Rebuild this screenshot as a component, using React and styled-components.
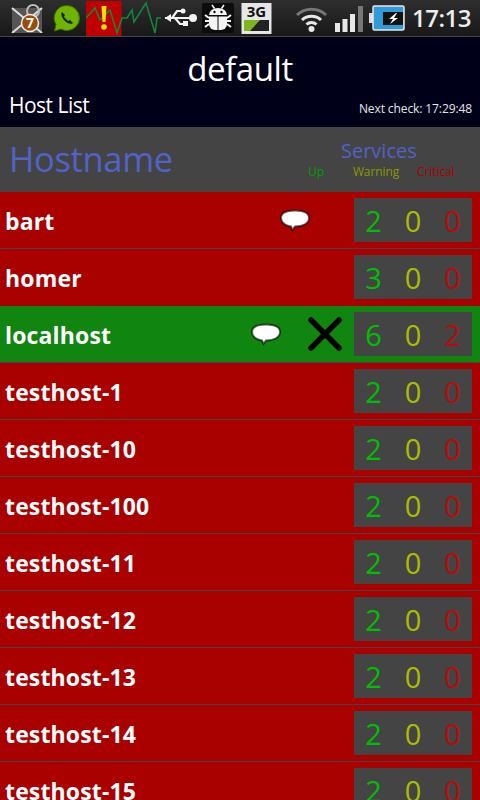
import styled, { createGlobalStyle } from 'styled-components'

const GlobalStyle = createGlobalStyle`
  html, body {
    margin: 0;
    padding: 0;
    background: #000;
  }
  body {
    font-family: 'Open Sans', 'Noto Sans', sans-serif;
  }
`

const Screen = styled.div`
  width: 480px;
  height: 800px;
  overflow: hidden;
  display: flex;
  flex-direction: column;
`

const StatusBar = styled.div`
  flex: 0 0 37px;
  box-sizing: border-box;
  display: flex;
  align-items: center;
  padding-left: 11px;
  background: linear-gradient(#2e2e2e, #181818);
  border-bottom: 1px solid #444;
`

const StatusIcon = styled.svg`
  flex: none;
  display: block;
  margin-left: ${(p) => p.$left || 0}px;
`

const Clock = styled.span`
  margin-left: 7px;
  color: #eee;
  font-size: 24px;
  font-weight: 600;
  line-height: 36px;
  letter-spacing: -0.5px;
`

const TitleBar = styled.header`
  flex: 0 0 90px;
  background: #000018;
  color: #fff;
  display: flex;
  flex-direction: column;
`

const AppTitle = styled.h1`
  margin: 9px 0 0;
  font-size: 33px;
  line-height: 45px;
  font-weight: 400;
  letter-spacing: -0.4px;
  text-align: center;
`

const TitleRow = styled.div`
  display: flex;
  justify-content: space-between;
  align-items: baseline;
  padding: 0 8px 0 9px;
`

const PageName = styled.span`
  font-size: 21px;
  line-height: 28px;
  letter-spacing: -0.5px;
`

const NextCheck = styled.span`
  font-size: 12px;
  letter-spacing: -0.1px;
  color: #e6e6e6;
`

const ColumnHeader = styled.div`
  flex: 0 0 65px;
  background: #444;
  display: flex;
  align-items: center;
  justify-content: space-between;
`

const HostnameLabel = styled.span`
  margin-left: 9px;
  margin-top: -2px;
  color: #4f63c8;
  font-size: 34.5px;
  letter-spacing: -0.35px;
`

const ServicesHead = styled.div`
  width: 172px;
  margin-top: -3px;
  display: flex;
  flex-direction: column;
  align-items: flex-start;
`

const ServicesLabel = styled.span`
  color: #4f63c8;
  font-size: 20px;
  line-height: 27px;
  margin-left: 33px;
`

const ServicesLegend = styled.div`
  align-self: stretch;
  display: flex;
  font-size: 12px;
  line-height: 16px;
  letter-spacing: -0.1px;
`

const LegendItem = styled.span`
  color: ${(p) => p.$color};
  margin-left: ${(p) => p.$left}px;
`

const HostRow = styled.div`
  flex: 0 0 57px;
  box-sizing: border-box;
  display: flex;
  align-items: center;
  background: ${(p) => (p.$ok ? '#10850f' : '#a90000')};
  border-bottom: 1px solid ${(p) => (p.$line ? '#444' : '#a90000')};
  padding-right: 8px;
`

const HostName = styled.span`
  flex: 1;
  margin-left: 5px;
  padding-top: 2px;
  color: #fff;
  font-size: 23px;
  font-weight: 700;
  letter-spacing: 0.15px;
`

const FlagIcon = styled.svg`
  flex: none;
  display: block;
  margin-right: ${(p) => p.$right}px;
`

const CountBox = styled.div`
  width: 118px;
  height: 44px;
  flex: none;
  background: #444;
  display: grid;
  grid-template-columns: repeat(3, 1fr);
  text-align: center;
  align-items: center;
  font-size: 29px;
  line-height: 42px;
`

const Count = styled.span`
  padding-top: 2px;
  color: ${(p) => p.$color};
`

const UP = '#00bf00'
const WARNING = '#adbb00'
const CRITICAL = '#bb0a0a'

const hosts = [
  { name: 'bart', up: 2, warn: 0, crit: 0, comment: 43, line: true },
  { name: 'homer', up: 3, warn: 0, crit: 0, line: false },
  { name: 'localhost', up: 6, warn: 0, crit: 2, ok: true, comment: 24, muted: true, line: true },
  { name: 'testhost-1', up: 2, warn: 0, crit: 0, line: true },
  { name: 'testhost-10', up: 2, warn: 0, crit: 0, line: true },
  { name: 'testhost-100', up: 2, warn: 0, crit: 0, line: true },
  { name: 'testhost-11', up: 2, warn: 0, crit: 0, line: true },
  { name: 'testhost-12', up: 2, warn: 0, crit: 0, line: true },
  { name: 'testhost-13', up: 2, warn: 0, crit: 0, line: true },
  { name: 'testhost-14', up: 2, warn: 0, crit: 0, line: true },
  { name: 'testhost-15', up: 2, warn: 0, crit: 0, line: true },
]

function CommentBubble({ right }) {
  return (
    <FlagIcon $right={right} width="32" height="26" viewBox="0 0 32 26">
      <path
        d="M16 3.500C8 3.500 2 5.500 2 11S8 19 12 19.500l1.500 3.500L16 19.500c8 0 14-3 14-8.500S24 3.500 16 3.500z"
        fill="#fff"
        stroke="#000"
        strokeOpacity="0.6"
        strokeWidth="2"
      />
    </FlagIcon>
  )
}

function MutedCross() {
  return (
    <FlagIcon $right={10} width="38" height="38" viewBox="0 0 38 38">
      <path d="M5 5l28 28M33 5L5 33" stroke="#000" strokeWidth="5.500" strokeLinecap="round" />
    </FlagIcon>
  )
}

function StatusIcons() {
  return (
    <>
      <StatusIcon width="36" height="30" viewBox="0 0 36 30">
        <path d="M1 5h30v25H1z" fill="#555" />
        <path d="M1 5l30 25M31 5L1 30" stroke="#ddd" strokeWidth="2" />
        <circle cx="22" cy="8" r="6" fill="none" stroke="#bbb" strokeWidth="2" />
        <circle cx="19" cy="20" r="8.500" fill="#9a4c08" stroke="#eee" strokeWidth="1.500" />
        <text x="19" y="25" fontSize="14" fontWeight="700" fill="#fff" textAnchor="middle">7</text>
      </StatusIcon>
      <StatusIcon $left={6} width="28" height="28" viewBox="0 0 28 28">
        <path d="M14 1.500a12.500 12.500 0 0 1 0 25c-2 0-4-.5-6-1.500L1.500 27l1.500-6.500A12.500 12.500 0 0 1 14 1.500z" fill="#6fb400" stroke="#3c6a00" />
        <path d="M9 8c-2 3 1 7 3 9s6 4 8 2l-3-3-2 1-4-4 1-2z" fill="#16240a" />
      </StatusIcon>
      <StatusIcon $left={5} width="75" height="36" viewBox="0 0 75 36">
        <path d="M0 1h35.500v35H0z" fill="#c00000" />
        <path
          d="M0 18l9-10 5 12 10-10 7 23 5-15h5l5-8 2 12 12-19 9 30 2-15h4"
          fill="none"
          stroke="#128a3c"
          strokeWidth="1.500"
        />
        <path d="M15.500 6h5l-1 16h-3z" fill="#f0e000" />
        <circle cx="18" cy="27" r="2.800" fill="#f0e000" />
      </StatusIcon>
      <StatusIcon $left={3} width="34" height="20" viewBox="0 0 34 20">
        <path d="M1 10h26M8 10l5-7h5M11 10l5 6h4" fill="none" stroke="#f2f2f2" strokeWidth="2.200" />
        <path d="M1 10l6-4v8z" fill="#f2f2f2" />
        <circle cx="29" cy="10" r="4" fill="#f2f2f2" />
        <circle cx="19" cy="3" r="2.500" fill="#f2f2f2" />
        <path d="M19 13h5v5h-5z" fill="#f2f2f2" />
      </StatusIcon>
      <StatusIcon $left={4} width="32" height="32" viewBox="0 0 32 32">
        <rect x="0" y="1" width="32" height="30" rx="2" fill="#0c0c0c" />
        <path d="M7 13a9 7 0 0 1 18 0z" fill="#f4f4f4" />
        <path d="M7 14.500h18V22a6 6 0 0 1-6 6h-6a6 6 0 0 1-6-6z" fill="#f4f4f4" />
        <path d="M16 14v14" stroke="#0c0c0c" />
        <path d="M3 13l4 3M3 19h4M3 25l4-3M29 13l-4 3M29 19h-4M29 25l-4-3" stroke="#f4f4f4" strokeWidth="2" />
        <path d="M10 3l2.500 3.500M22 3l-2.500 3.500" stroke="#f4f4f4" strokeWidth="1.500" />
        <circle cx="12.500" cy="10" r="1.200" fill="#0c0c0c" />
        <circle cx="19.500" cy="10" r="1.200" fill="#0c0c0c" />
      </StatusIcon>
      <StatusIcon $left={7} width="32" height="32" viewBox="0 0 32 32">
        <path d="M.5 1h30v31H.5z" fill="#e6e6e6" />
        <path d="M3 18h25v11H3z" fill="#222" />
        <path d="M3 29V18h16L9 29z" fill="#7fb61c" />
        <text x="15.500" y="15" fontSize="15" fontWeight="700" fill="#111" textAnchor="middle">3G</text>
      </StatusIcon>
      <StatusIcon $left={22} width="33" height="28" viewBox="0 0 33 28">
        <path d="M2 11a21 21 0 0 1 29 0" fill="none" stroke="#777" strokeWidth="3" />
        <path d="M7 16a14 14 0 0 1 19 0" fill="none" stroke="#e8e8e8" strokeWidth="3" />
        <path d="M11.500 20.500a7.500 7.500 0 0 1 10 0" fill="none" stroke="#e8e8e8" strokeWidth="3" />
        <circle cx="16.500" cy="25" r="3" fill="#e8e8e8" />
      </StatusIcon>
      <StatusIcon $left={6} width="30" height="28" viewBox="0 0 30 28">
        <path d="M1 19h5v9H1z" fill="#e8e8e8" />
        <path d="M8.500 15h5v13h-5z" fill="#e8e8e8" />
        <path d="M16 10h5v18h-5z" fill="#e8e8e8" />
        <path d="M24 2h5v26h-5z" fill="#777" />
      </StatusIcon>
      <StatusIcon $left={5} width="36" height="26" viewBox="0 0 36 26">
        <path d="M0 8h4v10H0z" fill="#ddd" />
        <rect x="4" y="1" width="31" height="24" rx="1.500" fill="#2f9bd8" stroke="#e8e8e8" strokeWidth="1.500" />
        <path d="M14 7h20v13H14z" fill="#111" />
        <path d="M27 8l-7 6h4l-3 5 8-6h-4l3-5z" fill="#fff" />
      </StatusIcon>
    </>
  )
}

export default function App() {
  return (
    <Screen>
      <GlobalStyle />
      <StatusBar>
        <StatusIcons />
        <Clock>17:13</Clock>
      </StatusBar>
      <TitleBar>
        <AppTitle>default</AppTitle>
        <TitleRow>
          <PageName>Host List</PageName>
          <NextCheck>Next check: 17:29:48</NextCheck>
        </TitleRow>
      </TitleBar>
      <ColumnHeader>
        <HostnameLabel>Hostname</HostnameLabel>
        <ServicesHead>
          <ServicesLabel>Services</ServicesLabel>
          <ServicesLegend>
            <LegendItem $color="#00a000" $left={0}>Up</LegendItem>
            <LegendItem $color="#8a9a00" $left={29}>Warning</LegendItem>
            <LegendItem $color="#aa0000" $left={18}>Critical</LegendItem>
          </ServicesLegend>
        </ServicesHead>
      </ColumnHeader>
      {hosts.map((host) => (
        <HostRow key={host.name} $ok={host.ok} $line={host.line}>
          <HostName>{host.name}</HostName>
          {host.comment && <CommentBubble right={host.comment} />}
          {host.muted && <MutedCross />}
          <CountBox>
            <Count $color={UP}>{host.up}</Count>
            <Count $color={WARNING}>{host.warn}</Count>
            <Count $color={CRITICAL}>{host.crit}</Count>
          </CountBox>
        </HostRow>
      ))}
    </Screen>
  )
}
